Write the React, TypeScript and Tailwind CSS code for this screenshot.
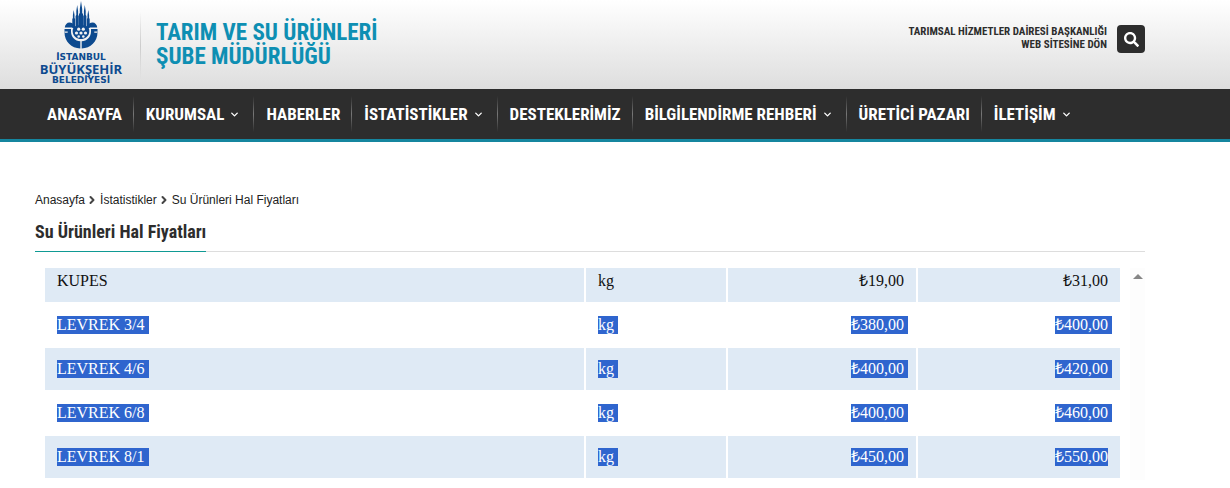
import { ChevronDown, ChevronRight } from "lucide-react";
import { FaSearch } from "react-icons/fa";

const condensed = "font-['Roboto_Condensed','Liberation_Sans_Narrow',Roboto,sans-serif]";

const menuItems = [
  { label: "ANASAYFA", href: "#anasayfa" },
  { label: "KURUMSAL", href: "#kurumsal", dropdown: true },
  { label: "HABERLER", href: "#haberler" },
  { label: "İSTATİSTİKLER", href: "#istatistikler", dropdown: true },
  { label: "DESTEKLERİMİZ", href: "#desteklerimiz" },
  { label: "BİLGİLENDİRME REHBERİ", href: "#rehber", dropdown: true },
  { label: "ÜRETİCİ PAZARI", href: "#uretici-pazari" },
  { label: "İLETİŞİM", href: "#iletisim", dropdown: true },
];

const prices = [
  { name: "KUPES", unit: "kg", min: "₺19,00", max: "₺31,00", selected: false },
  { name: "LEVREK 3/4", unit: "kg", min: "₺380,00", max: "₺400,00", selected: true },
  { name: "LEVREK 4/6", unit: "kg", min: "₺400,00", max: "₺420,00", selected: true },
  { name: "LEVREK 6/8", unit: "kg", min: "₺400,00", max: "₺460,00", selected: true },
  { name: "LEVREK 8/1", unit: "kg", min: "₺450,00", max: "₺550,00", selected: true },
];

function Emblem() {
  return (
    <svg width="34" height="48" viewBox="0 0 34 48" fill="#0d4a8f" aria-hidden="true">
      {/* minarets */}
      <path d="M17 0l1.200 8v4l.8 1v13h-4V13l.8-1V8z" />
      <path d="M13.200 4l.9 6v4l.7 1v11h-3.200V15l.7-1v-4z" />
      <path d="M20.800 4l.9 6v4l.7 1v11h-3.200V15l.7-1v-4z" />
      <path d="M9.700 9l.8 5v3l.6 1v9H8.300v-9l.6-1v-3z" />
      <path d="M24.300 9l.8 5v3l.6 1v9h-2.800v-9l.6-1v-3z" />
      {/* side domes */}
      <path d="M.8 26.500C1 23.500 3 21.500 5.500 21.500c2.200 0 3.800 1 4.500 3l-1.200 2z" />
      <path d="M33.200 26.500c-.2-3-2.200-5-4.700-5-2.200 0-3.800 1-4.500 3l1.200 2z" />
      {/* central dome */}
      <path d="M10 26c2-2.500 12-2.500 14 0 1.300 1.600 1.500 3.500 1.200 5.500-.8 4-4 6.500-8.200 6.500s-7.400-2.500-8.200-6.500C8.500 29.500 8.700 27.600 10 26z" />
      <g fill="#f2f2f2">
        <circle cx="14.700" cy="28.200" r="1.600" />
        <circle cx="19.300" cy="28.200" r="1.600" />
        <circle cx="12.500" cy="32" r="1.600" />
        <circle cx="17" cy="32" r="1.600" />
        <circle cx="21.500" cy="32" r="1.600" />
        <circle cx="14.700" cy="35.500" r="1.300" />
        <circle cx="19.300" cy="35.500" r="1.300" />
      </g>
      {/* bosphorus shores */}
      <path d="M.5 28H7v2.500c0 5.500 4 9.500 9.300 9.800V47.500C7.500 47.300.5 40.500.5 31.500z" />
      <path d="M33.500 28H27v2.500c0 5.500-4 9.500-9.300 9.800V47.500c8.800-.2 15.800-7 15.800-16z" />
      <path d="M.5 30.500h3.200v1.200H.8zM33.500 30.500h-3.200v1.200h2.900z" fill="#f2f2f2" />
    </svg>
  );
}

function Header() {
  return (
    <header className="h-[89px] bg-linear-to-b from-white to-[#dedede] pl-[35px] pr-[85px] flex items-start justify-between">
      <div className="flex items-start">
        <a
          href="#ibb"
          className="w-[92px] flex flex-col items-center pt-px text-[#0d4a8f] font-bold"
        >
          <Emblem />
          <span className="mt-1 text-[9px] leading-[9px] font-['DejaVu_Sans',sans-serif]">İSTANBUL</span>
          <span className="text-[13px] leading-[14px] font-['Open_Sans',sans-serif]">BÜYÜKŞEHİR</span>
          <span className="text-[9px] leading-[9px] font-['DejaVu_Sans',sans-serif]">BELEDİYESİ</span>
        </a>
        <div className="ml-[13px] mt-3 w-px h-[68px] bg-linear-to-b from-transparent via-[#cccccc] to-transparent" />
        <a href="#sube" className={`ml-[15px] mt-[21px] text-[23px] leading-[24px] font-bold text-[#0e8fb3] ${condensed}`}>
          TARIM VE SU ÜRÜNLERİ
          <br />
          ŞUBE MÜDÜRLÜĞÜ
        </a>
      </div>
      <div className="flex items-start gap-[10px] mt-[25px]">
        <a href="#baskanlik" className={`text-right text-[11px] leading-[13px] font-bold text-[#2d2d2d] ${condensed}`}>
          TARIMSAL HİZMETLER DAİRESİ BAŞKANLIĞI
          <br />
          WEB SİTESİNE DÖN
        </a>
        <button
          type="button"
          aria-label="Ara"
          className="size-7 rounded bg-[#2d2d2d] text-white flex items-center justify-center"
        >
          <FaSearch size={15} />
        </button>
      </div>
    </header>
  );
}

function Nav() {
  return (
    <nav className="bg-[#2d2d2d] border-b-3 border-[#15869f] pl-[35px]">
      <ul className="flex items-center h-[50px]">
        {menuItems.map((item, i) => (
          <li key={item.href} className="flex items-center">
            {i > 0 && (
              <span className="w-px h-9 bg-linear-to-b from-transparent via-[#777777] to-transparent" />
            )}
            <a
              href={item.href}
              className={`flex items-center pl-3 pr-[11px] whitespace-nowrap text-white text-[17px] leading-[24px] font-bold ${condensed}`}
            >
              {item.label}
              {item.dropdown && <ChevronDown className="ml-[5px] mr-0.5 size-[11px]" strokeWidth={3} />}
            </a>
          </li>
        ))}
      </ul>
    </nav>
  );
}

function Breadcrumb() {
  return (
    <div className="flex items-center text-[12px] leading-[16px] text-[#222222] font-['Liberation_Sans',sans-serif]">
      <a href="#anasayfa">Anasayfa</a>
      <ChevronRight className="ml-px mr-0.5 size-3 text-[#444444]" strokeWidth={4} />
      <a href="#istatistikler">İstatistikler</a>
      <ChevronRight className="ml-px mr-0.5 size-3 text-[#444444]" strokeWidth={4} />
      <span>Su Ürünleri Hal Fiyatları</span>
    </div>
  );
}

function Cell({ text, selected, last }: { text: string; selected: boolean; last?: boolean }) {
  if (!selected) return <>{text}</>;
  return (
    <span className={`inline-block bg-[#2f65ce] text-white ${last ? "" : "pr-1 -mr-1"}`}>{text}</span>
  );
}

function PriceTable() {
  return (
    <div className="mt-4 ml-2 flex font-['Liberation_Serif',serif]">
      <table className="flex-1 -mt-[2px] table-fixed border-separate border-spacing-[2px] text-[16px] leading-[18px] text-[#111111]">
        <colgroup>
          <col />
          <col className="w-[140px]" />
          <col className="w-[188px]" />
          <col className="w-[202px]" />
        </colgroup>
        <tbody>
          {prices.map((row, i) => {
            const cell = `px-3 ${i === 0 ? "pt-1 pb-3" : "py-3"} ${i % 2 === 0 ? "bg-[#dfeaf5]" : ""}`;
            return (
              <tr key={row.name}>
                <td className={cell}>
                  <Cell text={row.name} selected={row.selected} />
                </td>
                <td className={cell}>
                  <Cell text={row.unit} selected={row.selected} />
                </td>
                <td className={`${cell} text-right`}>
                  <Cell text={row.min} selected={row.selected} />
                </td>
                <td className={`${cell} text-right`}>
                  <Cell text={row.max} selected={row.selected} last={i === prices.length - 1} />
                </td>
              </tr>
            );
          })}
        </tbody>
      </table>
      {/* scrollbar track */}
      <div className="ml-2 w-[15px] bg-[#fdfdfd] flex flex-col items-center pt-[6px]">
        <svg width="10" height="5" viewBox="0 0 10 5" fill="#868686" aria-hidden="true">
          <path d="M5 0l5 5H0z" />
        </svg>
      </div>
    </div>
  );
}

export default function App() {
  return (
    <div className="min-h-screen bg-white">
      <Header />
      <Nav />
      <main className="pl-[35px] pr-[85px] pt-[50px]">
        <Breadcrumb />
        <div className="mt-3 border-b border-[#dddddd] flex">
          <h1 className={`-mb-px pb-[7px] border-b border-[#0f9a94] text-[18px] leading-[24px] font-bold text-[#2d2d2d] ${condensed}`}>
            Su Ürünleri Hal Fiyatları
          </h1>
        </div>
        <PriceTable />
      </main>
    </div>
  );
}
